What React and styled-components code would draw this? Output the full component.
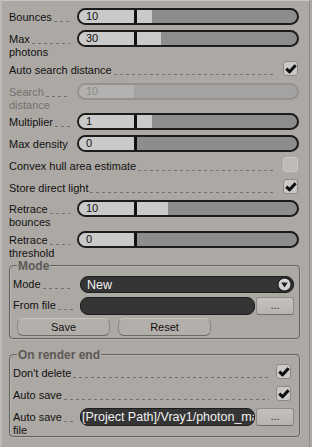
import React from "react";
import styled, { createGlobalStyle } from "styled-components";

const GlobalStyle = createGlobalStyle`
  html, body {
    margin: 0;
    padding: 0;
    background: #aca8a4;
  }
  body {
    font-family: "Liberation Sans", Arial, sans-serif;
    font-size: 11px;
    color: #111;
  }
`;

const Panel = styled.div`
  width: 310px;
  height: 447px;
  box-sizing: border-box;
  border-top: 1px solid #c9c5c1;
  border-left: 2px solid #bdb9b5;
  border-right: 1px solid #8f8b88;
  padding: 7px 10px 0 7px;
  display: flex;
  flex-direction: column;
`;

const Row = styled.div`
  display: grid;
  grid-template-columns: ${(p) => p.$labelWidth || 68}px minmax(0, 1fr);
  align-items: start;
  height: ${(p) => p.$h}px;
  flex-shrink: 0;
`;

const CheckRow = styled.div`
  display: grid;
  grid-template-columns: minmax(0, 1fr) 15px;
  column-gap: 7px;
  align-items: start;
  height: ${(p) => p.$h}px;
  padding-right: ${(p) => p.$inset ?? 1}px;
  flex-shrink: 0;
`;

const LabelBox = styled.div`
  padding-top: ${(p) => p.$top ?? 3}px;
  padding-right: ${(p) => p.$gap ?? 7}px;
  line-height: 13px;
  color: ${(p) => (p.$disabled ? "#75716d" : "#111")};
  white-space: nowrap;
  min-width: 0;
`;

const LabelLine = styled.div`
  display: flex;
  align-items: flex-end;
`;

const Leader = styled.span`
  flex: 1;
  height: 1px;
  margin: 0 0 2px 2px;
  background-image: repeating-linear-gradient(
    90deg,
    #75716e 0 3px,
    transparent 3px 6px
  );
`;

const Track = styled.div`
  height: 17px;
  box-sizing: border-box;
  border: 2px solid ${(p) => (p.$disabled ? "#959391" : "#1c1c1c")};
  border-radius: 9px;
  background: ${(p) => (p.$disabled ? "#a5a3a1" : "#8d8d8d")};
  display: flex;
  overflow: hidden;
`;

const ValueBox = styled.div`
  width: 58px;
  flex-shrink: 0;
  box-sizing: border-box;
  padding-left: 7px;
  line-height: 13px;
  background: ${(p) => (p.$disabled ? "#b3b2b1" : "#cacaca")};
  color: ${(p) => (p.$disabled ? "#8a8885" : "#111")};
  border-right: 3px solid ${(p) => (p.$disabled ? "#a5a3a1" : "#111")};
`;

const Fill = styled.div`
  background: #cacaca;
  flex-shrink: 0;
`;

const Box = styled.div`
  width: 15px;
  height: 15px;
  box-sizing: border-box;
  border-radius: 3px;
  border: 1px solid ${(p) => (p.$checked ? "#8c8987" : "#c9c6c3")};
  background: ${(p) => (p.$checked ? "#cbc9c7" : "#bdbab7")};
  display: flex;
  align-items: center;
  justify-content: center;
`;

const Group = styled.fieldset`
  margin: ${(p) => p.$mt}px -2px 0 0;
  padding: ${(p) => p.$pt}px 5px ${(p) => p.$pb}px 2px;
  border: 2px groove #b8b4b0;
  border-radius: 5px;
  min-width: 0;
  display: flex;
  flex-direction: column;
`;

const Legend = styled.legend`
  margin-left: 4px;
  padding: 0 1px;
  font-size: 12px;
  font-weight: bold;
  line-height: 14px;
  color: #5c5956;
`;

const DarkField = styled.div`
  height: ${(p) => p.$h}px;
  box-sizing: border-box;
  flex: 1;
  min-width: 0;
  background: #353535;
  border: 1px solid #1d1d1d;
  border-radius: 8px;
  color: #f2f2f2;
  font-size: 12.5px;
  display: flex;
  align-items: center;
  justify-content: space-between;
  padding: 0 1px 0 ${(p) => p.$pl}px;
  overflow: hidden;
  white-space: nowrap;
`;

const FileLine = styled.div`
  display: flex;
  gap: 1px;
  min-width: 0;
`;

const DotsButton = styled.button`
  width: 38px;
  height: 18px;
  flex-shrink: 0;
  box-sizing: border-box;
  padding: 0 0 2px;
  border: 1px solid #8e8b88;
  border-bottom-color: #6f6c69;
  border-radius: 3px;
  background: linear-gradient(#c4c1be, #b6b3b0);
  font: 11px "Liberation Sans", Arial, sans-serif;
  color: #222;
  line-height: 1;
`;

const ButtonBar = styled.div`
  display: flex;
  gap: 8px;
  padding-left: 4px;
  height: 18px;
`;

const Button = styled.button`
  width: 93px;
  height: 18px;
  box-sizing: border-box;
  padding: 0;
  border: 1px solid #8b8784;
  border-top-color: #c9c5c1;
  border-bottom-color: #6c6966;
  border-radius: 6px;
  background: #b2aeaa;
  font: 11px "Liberation Sans", Arial, sans-serif;
  color: #111;
`;

function Label({ lines, disabled, top, gap }) {
  const [first, ...rest] = lines;
  return (
    <LabelBox $disabled={disabled} $top={top} $gap={gap}>
      <LabelLine>
        <span>{first}</span>
        <Leader />
      </LabelLine>
      {rest.map((l) => (
        <div key={l}>{l}</div>
      ))}
    </LabelBox>
  );
}

function Slider({ value, fill = 0, disabled }) {
  return (
    <Track $disabled={disabled}>
      <ValueBox $disabled={disabled}>{value}</ValueBox>
      {fill > 0 && <Fill style={{ width: fill }} />}
    </Track>
  );
}

function Check({ checked }) {
  return (
    <Box $checked={checked}>
      {checked && (
        <svg width="12" height="11" viewBox="0 0 12 11">
          <path
            d="M1.3 5.6 L4.6 8.8 L10.6 2.2"
            fill="none"
            stroke="#0d0d0d"
            strokeWidth="3"
            strokeLinejoin="round"
          />
        </svg>
      )}
    </Box>
  );
}

function ArrowCircle() {
  return (
    <svg width="15" height="15" viewBox="0 0 15 15">
      <circle cx="7.5" cy="7.5" r="6.6" fill="#d2d2d2" stroke="#1a1a1a" strokeWidth="1.2" />
      <path d="M4.2 5.4 H10.8 L7.5 10.6 Z" fill="#1e1e1e" />
    </svg>
  );
}

const sliders = [
  { lines: ["Bounces"], value: "10", fill: 15, h: 22 },
  { lines: ["Max", "photons"], value: "30", fill: 24, h: 31 },
];

export default function App() {
  return (
    <>
      <GlobalStyle />
      <Panel>
        {sliders.map((s) => (
          <Row key={s.lines[0]} $h={s.h}>
            <Label lines={s.lines} />
            <Slider value={s.value} fill={s.fill} />
          </Row>
        ))}
        <CheckRow $h={22}>
          <Label lines={["Auto search distance"]} gap={0} />
          <Check checked />
        </CheckRow>
        <Row $h={30}>
          <Label lines={["Search", "distance"]} disabled />
          <Slider value="10" disabled />
        </Row>
        <Row $h={22}>
          <Label lines={["Multiplier"]} />
          <Slider value="1" fill={15} />
        </Row>
        <Row $h={22}>
          <Label lines={["Max density"]} />
          <Slider value="0" />
        </Row>
        <CheckRow $h={22}>
          <Label lines={["Convex hull area estimate"]} gap={0} />
          <Check />
        </CheckRow>
        <CheckRow $h={21}>
          <Label lines={["Store direct light"]} gap={0} />
          <Check checked />
        </CheckRow>
        <Row $h={31}>
          <Label lines={["Retrace", "bounces"]} />
          <Slider value="10" fill={31} />
        </Row>
        <Row $h={28}>
          <Label lines={["Retrace", "threshold"]} />
          <Slider value="0" />
        </Row>

        <Group $mt={0} $pt={3} $pb={2}>
          <Legend>Mode</Legend>
          <Row $h={21} $labelWidth={67}>
            <Label lines={["Mode"]} top={2} />
            <DarkField $h={17} $pl={6}>
              <span>New</span>
              <ArrowCircle />
            </DarkField>
          </Row>
          <Row $h={21} $labelWidth={67}>
            <Label lines={["From file"]} top={2} />
            <FileLine>
              <DarkField $h={18} $pl={6} />
              <DotsButton>...</DotsButton>
            </FileLine>
          </Row>
          <ButtonBar>
            <Button>Save</Button>
            <Button>Reset</Button>
          </ButtonBar>
        </Group>

        <Group $mt={8} $pt={2} $pb={0}>
          <Legend>On render end</Legend>
          <CheckRow $h={22} $inset={3}>
            <Label lines={["Don't delete"]} gap={0} top={2.5} />
            <Check checked />
          </CheckRow>
          <CheckRow $h={22} $inset={3}>
            <Label lines={["Auto save"]} gap={0} top={2.5} />
            <Check checked />
          </CheckRow>
          <Row $h={28} $labelWidth={67}>
            <Label lines={["Auto save", "file"]} top={2.5} />
            <FileLine>
              <DarkField $h={18} $pl={1}>
                <span>[Project Path]/Vray1/photon_map</span>
              </DarkField>
              <DotsButton>...</DotsButton>
            </FileLine>
          </Row>
        </Group>
      </Panel>
    </>
  );
}
